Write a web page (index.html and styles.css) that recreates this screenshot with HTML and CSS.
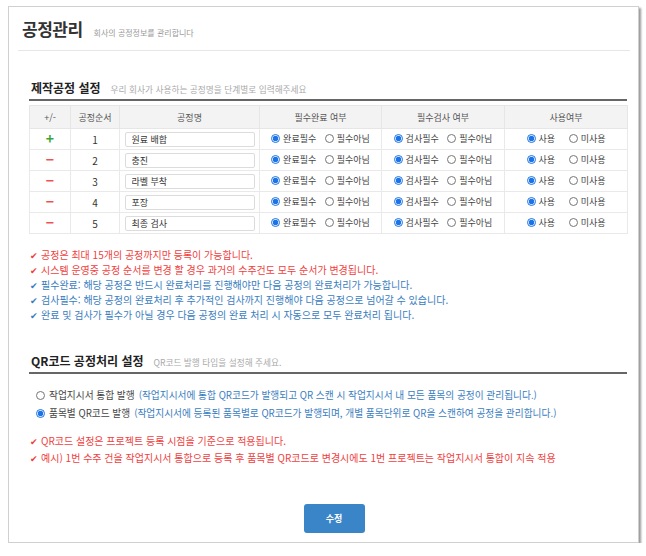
FILE: index.html
```html
<!DOCTYPE html>
<html lang="ko">
<head>
    <meta charset="UTF-8">
    <meta name="viewport" content="width=device-width, initial-scale=1.0">
    <title>공정관리</title>

    <link rel="stylesheet" href="styles.css">
</head>
<body>
<div class="frame">
    <!-- 상단 타이틀 -->
    <div class="page-head">
        <h1 class="page-title">공정관리</h1>
        <span class="page-desc">회사의 공정정보를 관리합니다</span>
    </div>

    <!-- 제작공정 설정 -->
    <div class="section">
        <div class="section-head">
            <h2 class="section-title">제작공정 설정</h2>
            <span class="section-desc">우리 회사가 사용하는 공정명을 단계별로 입력해주세요</span>
        </div>

        <table class="process-table">
            <colgroup>
                <col style="width: 41px">
                <col style="width: 49px">
                <col style="width: 140px">
                <col style="width: 122px">
                <col style="width: 123px">
                <col style="width: 123px">
            </colgroup>
            <thead>
                <tr>
                    <th>+/-</th>
                    <th>공정순서</th>
                    <th>공정명</th>
                    <th>필수완료 여부</th>
                    <th>필수검사 여부</th>
                    <th>사용여부</th>
                </tr>
            </thead>
            <tbody id="processRows"></tbody>
        </table>

        <ul class="notes">
            <li class="red">공정은 최대 15개의 공정까지만 등록이 가능합니다.</li>
            <li class="red">시스템 운영중 공정 순서를 변경 할 경우 과거의 수주건도 모두 순서가 변경됩니다.</li>
            <li class="blue">필수완료: 해당 공정은 반드시 완료처리를 진행해야만 다음 공정의 완료처리가 가능합니다.</li>
            <li class="blue">검사필수: 해당 공정의 완료처리 후 추가적인 검사까지 진행해야 다음 공정으로 넘어갈 수 있습니다.</li>
            <li class="blue">완료 및 검사가 필수가 아닐 경우 다음 공정의 완료 처리 시 자동으로 모두 완료처리 됩니다.</li>
        </ul>
    </div>

    <!-- QR코드 공정처리 설정 -->
    <div class="section section-qr">
        <div class="section-head">
            <h2 class="section-title">QR코드 공정처리 설정</h2>
            <span class="section-desc">QR코드 발행 타입을 설정해 주세요.</span>
        </div>

        <div class="qr-options">
            <label class="qr-option">
                <input type="radio" name="qr">
                <span>작업지시서 통합 발행</span>
                <span class="hint">(작업지시서에 통합 QR코드가 발행되고 QR 스캔 시 작업지시서 내 모든 품목의 공정이 관리됩니다.)</span>
            </label>
            <label class="qr-option">
                <input type="radio" name="qr" checked>
                <span>품목별 QR코드 발행</span>
                <span class="hint">(작업지시서에 등록된 품목별로 QR코드가 발행되며, 개별 품목단위로 QR을 스캔하여 공정을 관리합니다.)</span>
            </label>
        </div>

        <ul class="notes notes-qr">
            <li class="red">QR코드 설정은 프로젝트 등록 시점을 기준으로 적용됩니다.</li>
            <li class="red">예시) 1번 수주 건을 작업지시서 통합으로 등록 후 품목별 QR코드로 변경시에도 1번 프로젝트는 작업지시서 통합이 지속 적용</li>
        </ul>

        <div class="actions">
            <button class="btn-save" type="button">수정</button>
        </div>
    </div>
</div>

<script>
// 공정 목록
const processes = ["원료 배합", "충진", "라벨 부착", "포장", "최종 검사"];

const tbody = document.getElementById('processRows');

processes.forEach((name, i) => {
    const n = i + 1;
    const sign = i === 0
        ? '<span class="sign plus">+</span>'
        : '<span class="sign minus">&minus;</span>';

    const tr = document.createElement('tr');
    tr.innerHTML = `
        <td>${sign}</td>
        <td class="num">${n}</td>
        <td><input class="name-input" type="text" value="${name}"></td>
        <td>
            <label class="opt"><input type="radio" name="done${n}" checked>완료필수</label>
            <label class="opt"><input type="radio" name="done${n}">필수아님</label>
        </td>
        <td>
            <label class="opt"><input type="radio" name="check${n}" checked>검사필수</label>
            <label class="opt"><input type="radio" name="check${n}">필수아님</label>
        </td>
        <td>
            <label class="opt"><input type="radio" name="use${n}" checked>사용</label>
            <label class="opt opt-wide"><input type="radio" name="use${n}">미사용</label>
        </td>`;
    tbody.appendChild(tr);
});
</script>
</body>
</html>
```

FILE: styles.css
```css
body {
    margin: 0;
    padding: 6px 7px 0 8px;
    background: #fff;
    font-family: "Noto Sans CJK KR", "Noto Sans", sans-serif;
    color: #333;
}

/* 바깥 프레임 */
.frame {
    box-sizing: border-box;
    height: 537px;
    border: 1px solid #d0d0d0;
    box-shadow: 2px 2px 2px #9a9a9a;
    background: #fff;
}

.page-head {
    display: flex;
    align-items: baseline;
    gap: 11px;
    margin: 0 8px 0 9px;
    padding: 9px 4px 8px;
    border-bottom: 1px solid #e6e6e6;
}

.page-title {
    margin: 0;
    font-size: 17px;
    line-height: 26px;
    font-weight: 700;
    letter-spacing: -0.5px;
    color: #333;
}

.page-desc {
    font-size: 8px;
    color: #999;
}

/* 섹션 */
.section {
    margin: 0 11px 0 20px;
}

.section-head {
    display: flex;
    align-items: baseline;
    gap: 10px;
    margin-top: 28px;
    padding: 0 2px 2px;
    border-bottom: 2px solid #666;
}

.section-title {
    margin: 0;
    font-size: 12px;
    line-height: 18px;
    font-weight: 700;
    color: #222;
}

.section-desc {
    font-size: 8.7px;
    color: #aaa;
}

/* 공정 테이블 */
.process-table {
    width: 598px;
    margin-top: 4px;
    border-collapse: collapse;
    table-layout: fixed;
    font-size: 9px;
    color: #444;
}

.process-table th {
    height: 22px;
    padding: 0;
    background: #f3f3f3;
    border: 1px solid #e6e6e6;
    font-weight: 400;
    color: #555;
}

.process-table td {
    height: 20px;
    padding: 0;
    border: 1px solid #e9e9e9;
    text-align: center;
}

.process-table td.num {
    font-size: 10px;
    color: #333;
}

.sign {
    font-size: 14px;
    font-weight: 700;
    line-height: 1;
}

.plus {
    color: #3aa53a;
}

.minus {
    color: #f05050;
}

.name-input {
    box-sizing: border-box;
    display: block;
    width: 130px;
    height: 15px;
    margin: 0 auto;
    padding: 0 6px;
    border: 1px solid #dcdcdc;
    border-radius: 2px;
    font-family: inherit;
    font-size: 9px;
    color: #333;
    outline: none;
}

.opt {
    display: inline-flex;
    align-items: center;
    gap: 3px;
    margin: 0 3px;
    color: #444;
}

.opt-wide {
    margin-left: 8px;
}

input[type="radio"] {
    width: 9px;
    height: 9px;
    margin: 0;
    accent-color: #1a73e8;
}

/* 안내 문구 */
.notes {
    list-style: none;
    margin: 14px 0 0;
    padding: 0 1px;
    font-size: 10px;
    line-height: 14px;
}

.notes li::before {
    content: "✔";
    display: inline-block;
    width: 11px;
    font-size: 9px;
}

.notes .red {
    color: #f04040;
}

.notes .blue {
    color: #3a7dc0;
}

.section-qr .section-head {
    margin-top: 29px;
}

.qr-options {
    display: flex;
    flex-direction: column;
    margin-top: 12px;
    padding-left: 7px;
    font-size: 9.7px;
    line-height: 18px;
    color: #444;
}

.qr-option {
    display: flex;
    align-items: center;
    gap: 4px;
}

.qr-option .hint {
    color: #3a7dc0;
}

.notes-qr {
    margin-top: 11px;
    line-height: 16px;
}

/* 버튼 */
.actions {
    display: flex;
    justify-content: center;
    margin-top: 37px;
    padding-left: 12px;
}

.btn-save {
    width: 61px;
    height: 29px;
    border: none;
    border-radius: 3px;
    background: #3a85c8;
    font-family: inherit;
    font-size: 9px;
    font-weight: 700;
    color: #fff;
    cursor: pointer;
}
```
